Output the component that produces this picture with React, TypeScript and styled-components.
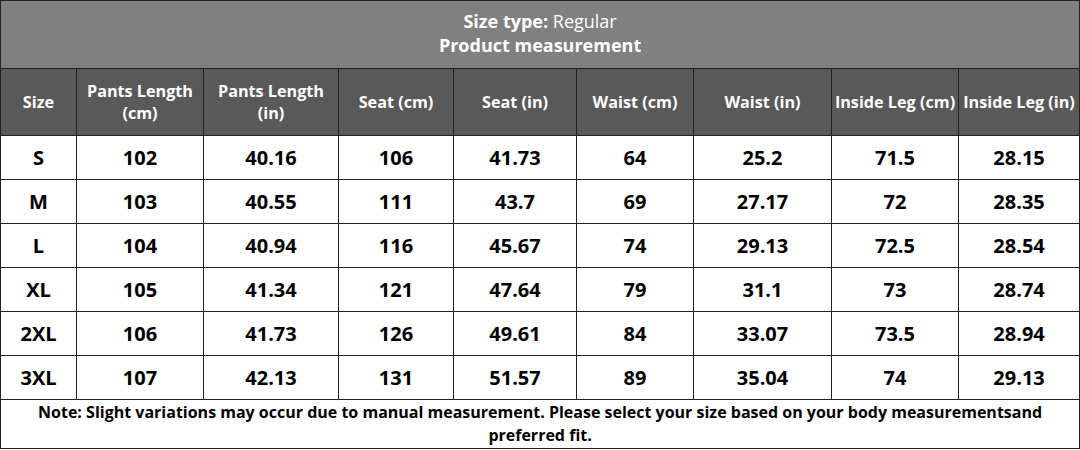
import React from 'react';
import styled, { createGlobalStyle } from 'styled-components';

const GlobalStyle = createGlobalStyle`
    body {
        margin: 0;
        background: #ffffff;
        font-family: "Open Sans", "Liberation Sans", sans-serif;
    }
`

const columns = [
    { label: 'Size', width: 76 },
    { label: 'Pants Length (cm)', width: 127 },
    { label: 'Pants Length (in)', width: 135 },
    { label: 'Seat (cm)', width: 115 },
    { label: 'Seat (in)', width: 123 },
    { label: 'Waist (cm)', width: 117 },
    { label: 'Waist (in)', width: 138 },
    { label: 'Inside Leg (cm)', width: 127 },
    { label: 'Inside Leg (in)', width: 121 },
];

const rows = [
    ['S', '102', '40.16', '106', '41.73', '64', '25.2', '71.5', '28.15'],
    ['M', '103', '40.55', '111', '43.7', '69', '27.17', '72', '28.35'],
    ['L', '104', '40.94', '116', '45.67', '74', '29.13', '72.5', '28.54'],
    ['XL', '105', '41.34', '121', '47.64', '79', '31.1', '73', '28.74'],
    ['2XL', '106', '41.73', '126', '49.61', '84', '33.07', '73.5', '28.94'],
    ['3XL', '107', '42.13', '131', '51.57', '89', '35.04', '74', '29.13'],
];

const App: React.FC = () => {
    return (
        <>
            <GlobalStyle />
            <Table>
                <colgroup>
                    {columns.map(col => <col key={col.label} style={{ width: col.width }} />)}
                </colgroup>
                <thead>
                    <tr>
                        <Title colSpan={columns.length}>
                            <b>Size type:</b> Regular
                            <br />
                            <b>Product measurement</b>
                        </Title>
                    </tr>
                    <tr>
                        {columns.map(col => (
                            <HeadCell key={col.label}>{col.label}</HeadCell>
                        ))}
                    </tr>
                </thead>
                <tbody>
                    {rows.map(row => (
                        <tr key={row[0]}>
                            {row.map((value, i) => (
                                <Cell key={i}>{value}</Cell>
                            ))}
                        </tr>
                    ))}
                    <tr>
                        <Note colSpan={columns.length}>
                            Note: Slight variations may occur due to manual measurement. Please select your size based on your body measurementsand preferred fit.
                        </Note>
                    </tr>
                </tbody>
            </Table>
        </>
    )
}

const Table = styled.table`
    width: 1080px;
    table-layout: fixed;
    border-collapse: collapse;
    border: 1px solid #222;

    td, th {
        border: 1px solid #222;
        text-align: center;
        padding: 0;
    }
`

const Title = styled.th`
    height: 63px;
    padding-bottom: 4px !important;
    background: #808080;
    color: #ffffff;
    font-size: 18px;
    font-weight: 400;
    line-height: 24px;

    b {
        font-weight: 700;
    }
`

const HeadCell = styled.th`
    height: 66px;
    background: #595959;
    color: #ffffff;
    font-size: 16.2px;
    font-weight: 700;
    line-height: 22px;
`

const Cell = styled.td`
    height: 43px;
    color: #000000;
    font-size: 20px;
    font-weight: 700;
`

const Note = styled.td`
    height: 48px;
    padding: 0 30px !important;
    color: #000000;
    font-size: 16px;
    font-weight: 700;
    line-height: 23px;
`

export default App;
